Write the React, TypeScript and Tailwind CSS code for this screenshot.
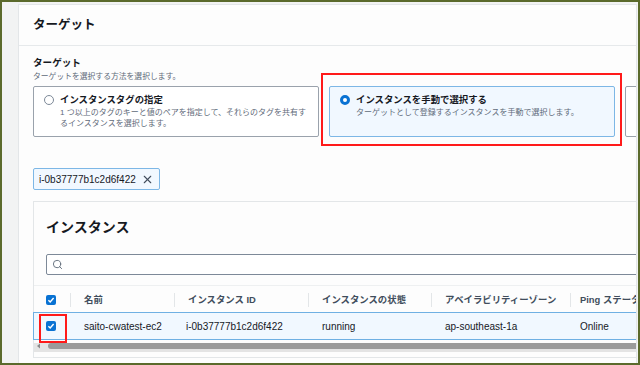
import React from 'react';
import { Search, X } from 'lucide-react';

const cols = 'grid grid-cols-[36px_104px_134px_123px_139px_120px]';

const Check: React.FC = () => (
  <span className="flex h-[10px] w-[10px] items-center justify-center rounded-[2px] bg-[#0972d3]">
    <svg width="8" height="8" viewBox="0 0 8 8">
      <path d="M1.4 4.2 3.2 6 6.6 2" fill="none" stroke="white" strokeWidth="1.4" />
    </svg>
  </span>
);

const Tile: React.FC<{ title?: string; desc?: string; on?: boolean }> = ({ title, desc, on }) => (
  <div
    className={
      on
        ? 'flex h-[51px] w-[286px] shrink-0 gap-[6px] rounded-[2px] border border-[#7db7e6] bg-[#f1f8ff] pl-[10px] pr-[8px] pt-[6px]'
        : 'flex h-[51px] w-[286px] shrink-0 gap-[6px] rounded-[2px] border border-[#9aa2ac] bg-white pl-[10px] pr-[8px] pt-[6px]'
    }
  >
    {on ? (
      <span className="mt-[2px] h-[10px] w-[10px] shrink-0 rounded-full border-[3px] border-[#0972d3] bg-white" />
    ) : (
      <span className="mt-[2px] h-[10px] w-[10px] shrink-0 rounded-full border border-[#7d8998] bg-white" />
    )}
    <div className="min-w-0">
      <div className="text-[9.4px] font-bold leading-[14px] text-[#16191f]">{title}</div>
      <div className="text-[8px] leading-[11px] text-[#5f6b7a]">{desc}</div>
    </div>
  </div>
);

export default function App() {
  return (
    <div className="relative h-[365px] w-[640px] overflow-hidden border-2 border-[#5b6a2c] bg-[#f2f3f3] pl-[16px] pr-[1px] pt-[2px] font-['Liberation_Sans','Noto_Sans_CJK_JP',sans-serif]">
      <div className="h-[400px] overflow-hidden border border-[#e3e6e8] bg-[#fdfdfd]">
        {/* Header */}
        <div className="flex h-[41px] items-center border-b border-[#e6e9eb] px-[14px]">
          <h2 className="text-[12.5px] font-bold text-[#16191f]">ターゲット</h2>
        </div>

        {/* Body */}
        <div className="px-[14px] pt-[10px]">
          <div className="h-[14px] text-[9.6px] font-bold leading-[14px] text-[#16191f]">ターゲット</div>
          <div className="h-[13px] text-[7.8px] leading-[13px] text-[#5f6b7a]">ターゲットを選択する方法を選択します。</div>

          <div className="mt-[3px] flex gap-[10px]">
            <Tile
              title="インスタンスタグの指定"
              desc="1 つ以上のタグのキーと値のペアを指定して、それらのタグを共有するインスタンスを選択します。"
            />
            <Tile on title="インスタンスを手動で選択する" desc="ターゲットとして登録するインスタンスを手動で選択します。" />
            <Tile />
          </div>

          <div className="mt-[31px] flex h-[22px] w-[127px] items-center justify-between rounded-[2px] border border-[#7db7e6] bg-[#f1f8ff] pl-[5px] pr-[5px]">
            <span className="text-[10px] text-[#16191f]">i-0b37777b1c2d6f422</span>
            <X size={13} strokeWidth={2} className="text-[#414d5c]" />
          </div>

          {/* Instances */}
          <div className="-mr-[60px] mt-[11px] border border-[#e3e6e8] bg-[#fdfdfd] pb-[5px]">
            <div className="px-[12px] pt-[16px]">
              <h2 className="text-[14px] font-bold leading-[18px] text-[#16191f]">インスタンス</h2>
              <div className="mt-[18px] flex h-[21px] items-center gap-[4px] rounded-[2px] border border-[#7d8998] bg-white pl-[5px]">
                <Search size={11} strokeWidth={2} className="text-[#5f6b7a]" />
              </div>
            </div>

            <div className={`${cols} mt-[10px] h-[27px] items-center border-t border-[#eef0f1] pt-[2px]`}>
              <div className="pl-[12px]">
                <Check />
              </div>
              {['名前', 'インスタンス ID', 'インスタンスの状態', 'アベイラビリティーゾーン', 'Ping ステータス'].map((h, i) => (
                <div key={h} className="flex items-center">
                  <span className="h-[14px] w-px bg-[#e3e6e8]" />
                  <span
                    className={
                      i === 4
                        ? 'whitespace-nowrap pl-[9px] text-[9.4px] font-bold text-[#414d5c]'
                        : 'whitespace-nowrap pl-[13px] text-[9.4px] font-bold text-[#414d5c]'
                    }
                  >
                    {h}
                  </span>
                </div>
              ))}
            </div>

            <div className={`${cols} -ml-px h-[28px] items-center border border-[#6fb0e3] bg-[#f1f8ff] text-[10px] text-[#16191f]`}>
              <div className="pl-[12px]">
                <Check />
              </div>
              <div className="pl-[14px]">saito-cwatest-ec2</div>
              <div className="pl-[12px]">i-0b37777b1c2d6f422</div>
              <div className="pl-[14px]">running</div>
              <div className="pl-[14px]">ap-southeast-1a</div>
              <div className="pl-[10px]">Online</div>
            </div>

            {/* Scrollbar */}
            <div className="mt-[3px] flex h-[9px] items-start bg-[#e4e4e4]">
              <svg width="14" height="6" viewBox="0 0 14 6" className="shrink-0">
                <path d="M3 3 6 0.5V5.5Z" fill="#8a8a8a" />
              </svg>
              <div className="h-[6px] flex-1 rounded-l-[3px] bg-[#9b9b9b]" />
            </div>
          </div>
        </div>
      </div>

      {/* Red annotation boxes */}
      <div className="absolute left-[319px] top-[71px] h-[73px] w-[301px] border-2 border-[#ff1a1a]" />
      <div className="absolute left-[37px] top-[312px] h-[29px] w-[28px] border-2 border-[#ff1a1a]" />
    </div>
  );
}
